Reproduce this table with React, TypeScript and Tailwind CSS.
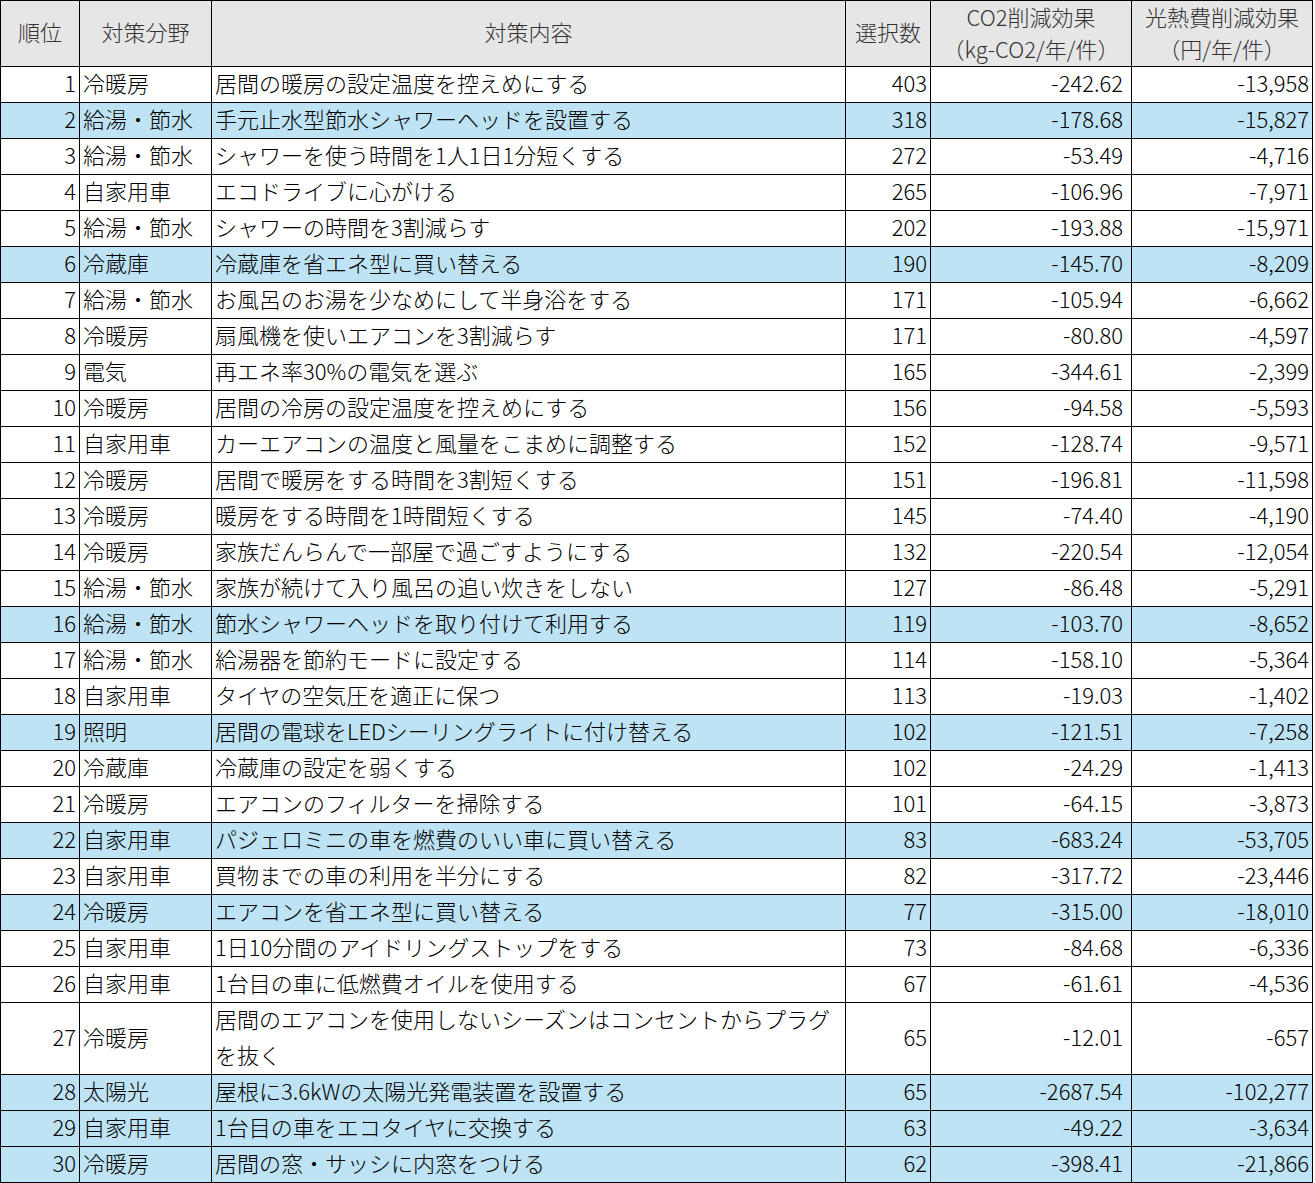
const ROWS: [number, string, string[], number, string, string, boolean][] = [
  [1, '冷暖房', ['居間の暖房の設定温度を控えめにする'], 403, '-242.62', '-13,958', false],
  [2, '給湯・節水', ['手元止水型節水シャワーヘッドを設置する'], 318, '-178.68', '-15,827', true],
  [3, '給湯・節水', ['シャワーを使う時間を1人1日1分短くする'], 272, '-53.49', '-4,716', false],
  [4, '自家用車', ['エコドライブに心がける'], 265, '-106.96', '-7,971', false],
  [5, '給湯・節水', ['シャワーの時間を3割減らす'], 202, '-193.88', '-15,971', false],
  [6, '冷蔵庫', ['冷蔵庫を省エネ型に買い替える'], 190, '-145.70', '-8,209', true],
  [7, '給湯・節水', ['お風呂のお湯を少なめにして半身浴をする'], 171, '-105.94', '-6,662', false],
  [8, '冷暖房', ['扇風機を使いエアコンを3割減らす'], 171, '-80.80', '-4,597', false],
  [9, '電気', ['再エネ率30%の電気を選ぶ'], 165, '-344.61', '-2,399', false],
  [10, '冷暖房', ['居間の冷房の設定温度を控えめにする'], 156, '-94.58', '-5,593', false],
  [11, '自家用車', ['カーエアコンの温度と風量をこまめに調整する'], 152, '-128.74', '-9,571', false],
  [12, '冷暖房', ['居間で暖房をする時間を3割短くする'], 151, '-196.81', '-11,598', false],
  [13, '冷暖房', ['暖房をする時間を1時間短くする'], 145, '-74.40', '-4,190', false],
  [14, '冷暖房', ['家族だんらんで一部屋で過ごすようにする'], 132, '-220.54', '-12,054', false],
  [15, '給湯・節水', ['家族が続けて入り風呂の追い炊きをしない'], 127, '-86.48', '-5,291', false],
  [16, '給湯・節水', ['節水シャワーヘッドを取り付けて利用する'], 119, '-103.70', '-8,652', true],
  [17, '給湯・節水', ['給湯器を節約モードに設定する'], 114, '-158.10', '-5,364', false],
  [18, '自家用車', ['タイヤの空気圧を適正に保つ'], 113, '-19.03', '-1,402', false],
  [19, '照明', ['居間の電球をLEDシーリングライトに付け替える'], 102, '-121.51', '-7,258', true],
  [20, '冷蔵庫', ['冷蔵庫の設定を弱くする'], 102, '-24.29', '-1,413', false],
  [21, '冷暖房', ['エアコンのフィルターを掃除する'], 101, '-64.15', '-3,873', false],
  [22, '自家用車', ['パジェロミニの車を燃費のいい車に買い替える'], 83, '-683.24', '-53,705', true],
  [23, '自家用車', ['買物までの車の利用を半分にする'], 82, '-317.72', '-23,446', false],
  [24, '冷暖房', ['エアコンを省エネ型に買い替える'], 77, '-315.00', '-18,010', true],
  [25, '自家用車', ['1日10分間のアイドリングストップをする'], 73, '-84.68', '-6,336', false],
  [26, '自家用車', ['1台目の車に低燃費オイルを使用する'], 67, '-61.61', '-4,536', false],
  [27, '冷暖房', ['居間のエアコンを使用しないシーズンはコンセントからプラグ', 'を抜く'], 65, '-12.01', '-657', false],
  [28, '太陽光', ['屋根に3.6kWの太陽光発電装置を設置する'], 65, '-2687.54', '-102,277', true],
  [29, '自家用車', ['1台目の車をエコタイヤに交換する'], 63, '-49.22', '-3,634', true],
  [30, '冷暖房', ['居間の窓・サッシに内窓をつける'], 62, '-398.41', '-21,866', true],
];

const COLS = 'grid grid-cols-[78px_131px_633px_84px_200px_180px] gap-px';

export default function App() {
  return (
    <div
      className="w-[1315px] bg-white text-[22px] font-light text-black"
      style={{ fontFamily: '"Noto Sans CJK JP", "Noto Sans", sans-serif' }}
    >
      <div className="flex w-[1313px] flex-col gap-px border border-black bg-black">
        <div className={`${COLS} h-[65px]`}>
          {['順位', '対策分野', '対策内容', '選択数'].map((h) => (
            <div key={h} className="flex items-center justify-center bg-[#e7e6e6] pb-[6px] leading-[26px] text-[#333]">
              {h}
            </div>
          ))}
          {[
            ['CO2削減効果', '（kg-CO2/年/件）'],
            ['光熱費削減効果', '（円/年/件）'],
          ].map(([a, b]) => (
            <div key={a} className="flex flex-col items-center gap-[6px] bg-[#e7e6e6] pt-[2px] leading-[26px] text-[#333]">
              <span>{a}</span>
              <span>{b}</span>
            </div>
          ))}
        </div>

        {ROWS.map(([rank, area, content, count, co2, cost, hl]) => {
          const bg = hl ? 'bg-[#bee3f4]' : 'bg-white';
          const cell = `flex items-center px-[3px] pb-[6px] leading-[26px] ${bg}`;
          const multi = content.length > 1;
          return (
            <div key={rank} className={`${COLS} ${multi ? 'h-[71px]' : 'h-[35px]'} overflow-hidden`}>
              <div className={`${cell} justify-end`}>{rank}</div>
              <div className={cell}>{area}</div>
              {multi ? (
                <div className={`flex flex-col gap-[10px] px-[3px] pt-[2px] leading-[26px] whitespace-nowrap ${bg}`}>
                  {content.map((l) => (
                    <div key={l}>{l}</div>
                  ))}
                </div>
              ) : (
                <div className={`${cell} whitespace-nowrap`}>{content[0]}</div>
              )}
              <div className={`${cell} justify-end`}>{count}</div>
              <div className={`${cell} justify-end pr-[8px]`}>{co2}</div>
              <div className={`${cell} justify-end`}>{cost}</div>
            </div>
          );
        })}
      </div>
    </div>
  );
}
